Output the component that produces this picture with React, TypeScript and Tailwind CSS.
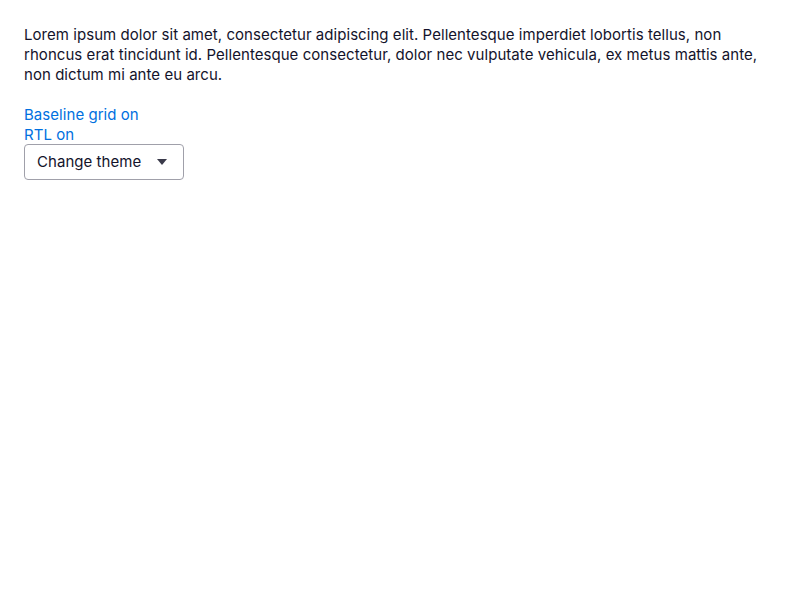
export default function App() {
  return (
    <div className="p-6 text-[15px] leading-5 text-[#13132b] tracking-[0.05px]" style={{ fontFamily: "Inter, 'Noto Sans', sans-serif" }}>
      <p className="mb-5 mt-[1px]">
        Lorem ipsum dolor sit amet, consectetur adipiscing elit. Pellentesque imperdiet lobortis tellus, non rhoncus erat tincidunt id. Pellentesque consectetur, dolor nec vulputate vehicula, ex metus mattis ante, non dictum mi ante eu arcu.
      </p>
      <div className="flex flex-col items-start">
        <button className="text-[#0070e0] leading-5">Baseline grid on</button>
        <button className="text-[#0070e0] leading-5">RTL on</button>
        <button className="-mt-[1px] flex h-9 w-40 items-center justify-between rounded border border-[#a0a0aa] pl-3 pr-4 text-[#13132b]">
          <span>Change theme</span>
          <svg width="10" height="6" viewBox="0 0 10 6"><path d="M0 0h10L5 6z" fill="#3a3a4a" /></svg>
        </button>
      </div>
    </div>
  );
}
